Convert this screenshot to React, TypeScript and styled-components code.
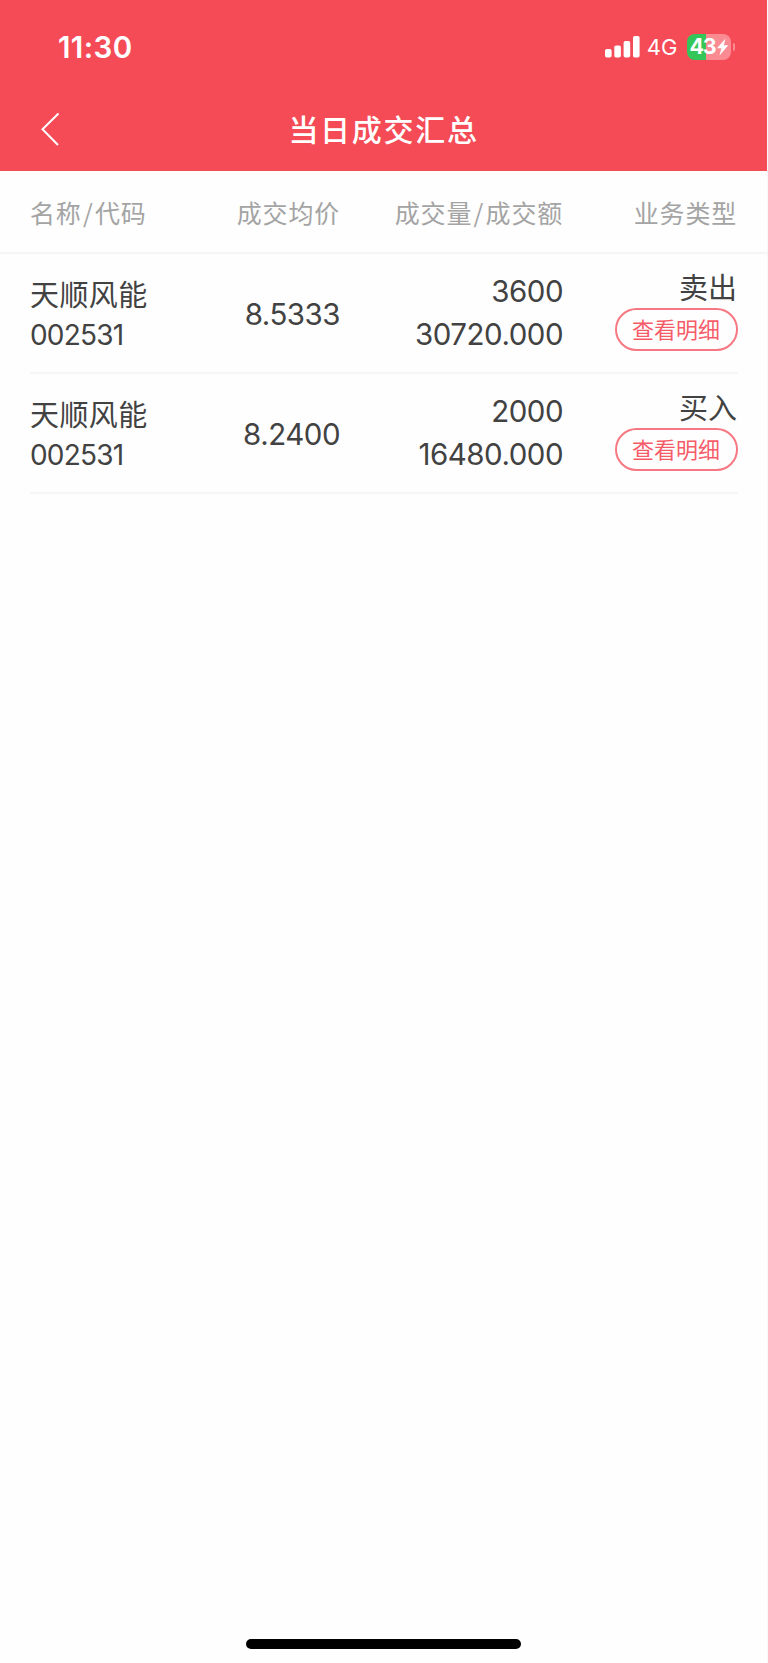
import React from 'react';
import styled, { createGlobalStyle } from 'styled-components';

const GlobalStyle = createGlobalStyle`
  * { box-sizing: border-box; }
  body {
    margin: 0;
    background: #fefefe;
    font-family: Inter, "Noto Sans CJK SC", sans-serif;
    color: #424242;
  }
`;

const Screen = styled.div`
  display: flex;
  flex-direction: column;
  width: 768px;
  height: 1663px;
  border-right: 1px solid #f7f7f7;
  background: #fefefe;
`;

const Header = styled.header`
  height: 171px;
  flex: none;
  background: #f54b57;
  color: #fff;
`;

const StatusBar = styled.div`
  display: flex;
  align-items: center;
  justify-content: space-between;
  height: 93px;
  padding: 0 32px 0 58px;
`;

const Time = styled.span`
  font-size: 29.5px;
  line-height: 36px;
  font-weight: 600;
  letter-spacing: 0.4px;
`;

const StatusIcons = styled.div`
  display: flex;
  align-items: center;
`;

const Network = styled.span`
  margin: 0 9.5px 0 7px;
  font-size: 22px;
  line-height: 28px;
`;

const Battery = styled.div`
  display: flex;
  align-items: center;
  justify-content: center;
  width: 44px;
  height: 26px;
  border-radius: 8px;
  background: linear-gradient(90deg, #35c65a 43.5%, #fa8b93 43.5%);
  font-size: 21.5px;
  line-height: 25px;
  font-weight: 700;
  letter-spacing: -1.2px;
`;

const BatteryLevel = styled.span`
  height: 26px;
`;

const BatteryCap = styled.div`
  width: 2px;
  height: 8px;
  margin-left: 2px;
  border-radius: 0 2px 2px 0;
  background: #fa8b93;
`;

const NavBar = styled.div`
  display: grid;
  grid-template-columns: 100px 1fr 100px;
  align-items: center;
  height: 73px;
`;

const BackButton = styled.button`
  display: flex;
  margin: -2px 0 0;
  padding: 0 0 0 40px;
  border: 0;
  background: none;
  color: inherit;
`;

const Title = styled.h1`
  margin: 0;
  text-align: center;
  font-size: 30px;
  line-height: 44px;
  font-weight: 500;
  letter-spacing: 1.7px;
`;

const columns = '150px 160px 223px 1fr';

const TableHead = styled.div`
  display: grid;
  grid-template-columns: ${columns};
  align-items: center;
  height: 83px;
  padding: 1px 30px 0;
  border-bottom: 2px solid #f5f5f5;
  color: #a4a4a4;
  font-family: "Noto Sans CJK SC", sans-serif;
  font-size: 25px;
  line-height: 36px;
  letter-spacing: 0.8px;
`;

const HeadCell = styled.div<{ $right?: boolean }>`
  text-align: ${(p) => (p.$right ? 'right' : 'left')};
  white-space: nowrap;
`;

const Slash = styled.span`
  margin: 0 1.4px;
`;

const Row = styled.div`
  display: grid;
  grid-template-columns: ${columns};
  height: 120px;
  margin: 0 29px 0 30px;
  border-bottom: 2px solid #f6f6f6;
`;

const NameCell = styled.div`
  padding-top: 22px;
`;

const Name = styled.div`
  font-size: 29px;
  line-height: 40px;
  letter-spacing: 0.4px;
  white-space: nowrap;
`;

const Code = styled.div`
  font-size: 28px;
  line-height: 38px;
  letter-spacing: -0.8px;
`;

const Price = styled.div`
  padding-top: 41px;
  text-align: right;
  font-size: 29.5px;
  line-height: 38px;
  letter-spacing: -0.5px;
`;

const Amounts = styled.div`
  padding-top: 16px;
  text-align: right;
  font-size: 29.5px;
  line-height: 43px;
  letter-spacing: -0.5px;
`;

const TypeCell = styled.div`
  display: flex;
  flex-direction: column;
  align-items: flex-end;
  padding-top: 15px;
`;

const Kind = styled.div`
  margin-right: 1px;
  font-size: 29px;
  line-height: 40px;
`;

const DetailButton = styled.button`
  width: 123px;
  height: 43px;
  margin: -1px 0 0;
  padding: 0 1px 0 0;
  border: 2px solid #f77883;
  border-radius: 22px;
  background: none;
  color: #f65c68;
  font-family: inherit;
  font-size: 22px;
  line-height: 38px;
`;

const HomeBar = styled.div`
  width: 275px;
  height: 10px;
  margin: auto auto 14px 246px;
  border-radius: 5px;
  background: #000;
`;

const trades = [
  { name: '天顺风能', code: '002531', price: '8.5333', volume: '3600', amount: '30720.000', kind: '卖出' },
  { name: '天顺风能', code: '002531', price: '8.2400', volume: '2000', amount: '16480.000', kind: '买入' },
];

export default function App() {
  return (
    <>
      <GlobalStyle />
      <Screen>
        <Header>
          <StatusBar>
            <Time>11:30</Time>
            <StatusIcons>
              <svg width="35" height="22" viewBox="0 0 35 22" fill="#fff">
                <rect x="0" y="13" width="6.6" height="8.6" rx="1.8" />
                <rect x="9.3" y="9.5" width="6.6" height="12.1" rx="1.8" />
                <rect x="18.6" y="5" width="6.6" height="16.6" rx="1.8" />
                <rect x="28" y="0" width="6.6" height="21.6" rx="1.8" />
              </svg>
              <Network>4G</Network>
              <Battery>
                <BatteryLevel>43</BatteryLevel>
                <svg width="13" height="18" viewBox="0 0 12 18" fill="#fff">
                  <path d="M9 0.5 0.5 10.2h4.4L3 17.5 11.8 7.3H7.3Z" />
                </svg>
              </Battery>
              <BatteryCap />
            </StatusIcons>
          </StatusBar>
          <NavBar>
            <BackButton aria-label="返回">
              <svg width="20" height="34" viewBox="0 0 20 34" fill="none" stroke="#fff" strokeWidth="2">
                <path d="M18.5 1.5 2.5 17.2 18 33" />
              </svg>
            </BackButton>
            <Title>当日成交汇总</Title>
          </NavBar>
        </Header>
        <TableHead>
          <HeadCell>名称<Slash>/</Slash>代码</HeadCell>
          <HeadCell $right>成交均价</HeadCell>
          <HeadCell $right>成交量<Slash>/</Slash>成交额</HeadCell>
          <HeadCell $right>业务类型</HeadCell>
        </TableHead>
        {trades.map((t) => (
          <Row key={t.kind}>
            <NameCell>
              <Name>{t.name}</Name>
              <Code>{t.code}</Code>
            </NameCell>
            <Price>{t.price}</Price>
            <Amounts>
              <div>{t.volume}</div>
              <div>{t.amount}</div>
            </Amounts>
            <TypeCell>
              <Kind>{t.kind}</Kind>
              <DetailButton>查看明细</DetailButton>
            </TypeCell>
          </Row>
        ))}
        <HomeBar />
      </Screen>
    </>
  );
}
